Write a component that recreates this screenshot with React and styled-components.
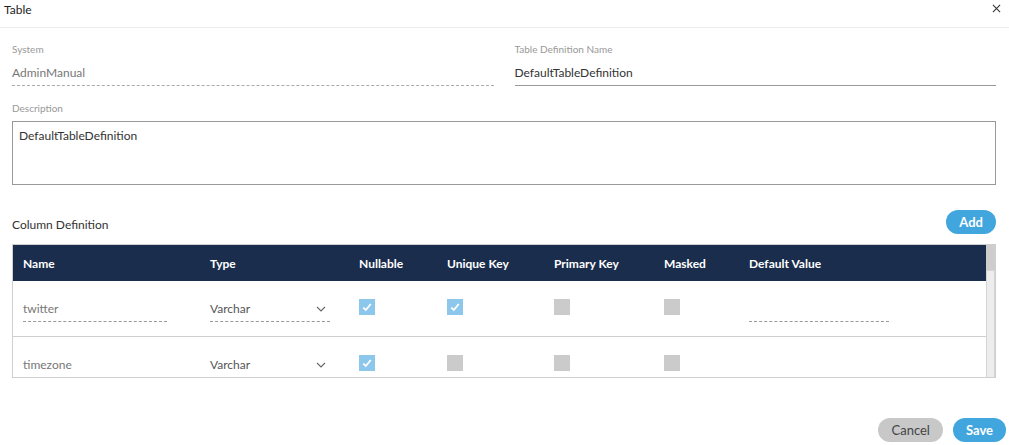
import React from "react";
import styled, { createGlobalStyle } from "styled-components";

const Global = createGlobalStyle`
  html, body { margin: 0; padding: 0; background: #fff; }
  body { font-family: "Segoe UI", Lato, "Open Sans", sans-serif; color: #333; }
  * { box-sizing: border-box; }
`;

const Dialog = styled.div`
  width: 1009px;
  height: 445px;
  display: flex;
  flex-direction: column;
  background: #fff;
`;

const Header = styled.div`
  height: 28px;
  border-bottom: 1px solid #ececec;
  padding: 2px 8px 0 4px;
  display: flex;
  justify-content: space-between;
  align-items: flex-start;
`;

const Title = styled.div`
  font-size: 12px;
  line-height: 16px;
  color: #222;
`;

const Close = styled.svg`
  width: 9px;
  height: 9px;
  margin-top: 2px;
`;

const Body = styled.div`
  padding: 14px 13px 0 12px;
  display: flex;
  flex-direction: column;
`;

const FieldRow = styled.div`
  display: grid;
  grid-template-columns: 1fr 1fr;
  column-gap: 21px;
`;

const Field = styled.div`
  display: flex;
  flex-direction: column;
`;

const Label = styled.div`
  font-size: 10px;
  line-height: 14px;
  color: #999;
  margin-top: ${(p) => p.$mt || 0}px;
`;

const Value = styled.div`
  font-size: 12px;
  line-height: 16px;
  padding: 9px 0 4px;
  color: ${(p) => (p.$readonly ? "#777" : "#333")};
  border-bottom: 1px ${(p) => (p.$readonly ? "dashed #aaa" : "solid #999")};
`;

const TextArea = styled.div`
  margin-top: 6px;
  height: 64px;
  border: 1px solid #999;
  padding: 6px 6px;
  font-size: 12px;
  line-height: 16px;
  color: #333;
`;

const SectionBar = styled.div`
  margin-top: 25px;
  display: flex;
  justify-content: space-between;
  align-items: center;
  height: 24px;
`;

const SectionTitle = styled.div`
  font-size: 12px;
  line-height: 16px;
  color: #333;
  padding-top: 6px;
`;

const PillButton = styled.button`
  height: 24px;
  border: none;
  border-radius: 12px;
  padding: 0 ${(p) => p.$px || 12}px;
  font-family: inherit;
  font-size: 13px;
  font-weight: ${(p) => (p.$primary ? 700 : 400)};
  background: ${(p) => (p.$primary ? "#41a5de" : "#c8c8c8")};
  color: ${(p) => (p.$primary ? "#fff" : "#444")};
  cursor: pointer;
`;

const TableWrap = styled.div`
  margin-top: 10px;
  height: 134px;
  border: 1px solid #cfcfcf;
  display: flex;
  overflow: hidden;
`;

const TableArea = styled.div`
  flex: 1;
  overflow: hidden;
`;

const cols = "187px 149px 88px 107px 110px 85px 1fr";

const HeadRow = styled.div`
  display: grid;
  grid-template-columns: ${cols};
  height: 36px;
  background: #1a2d4c;
  align-items: center;
`;

const HeadCell = styled.div`
  padding-left: 10px;
  font-size: 12px;
  font-weight: 700;
  color: #fff;
`;

const Row = styled.div`
  display: grid;
  grid-template-columns: ${cols};
  height: 56px;
  border-bottom: 1px solid #cfcfcf;
  align-items: start;
`;

const Cell = styled.div`
  padding-left: 10px;
  padding-top: 18px;
`;

const InputLine = styled.div`
  width: ${(p) => p.$w}px;
  height: 23px;
  padding-top: 2px;
  font-size: 12px;
  line-height: 16px;
  color: #777;
  border-bottom: ${(p) => (p.$underline ? "1px dashed #999" : "none")};
`;

const SelectLine = styled.div`
  width: 120px;
  height: 23px;
  padding-top: 2px;
  display: flex;
  justify-content: space-between;
  font-size: 12px;
  line-height: 16px;
  color: #555;
  border-bottom: ${(p) => (p.$underline ? "1px dashed #999" : "none")};
`;

const Chevron = styled.svg`
  width: 10px;
  height: 6px;
  margin: 5px 4px 0 0;
`;

const Box = styled.div`
  width: 16px;
  height: 16px;
  background: ${(p) => (p.$on ? "#8dc8ec" : "#cbcbcb")};
  display: flex;
  align-items: center;
  justify-content: center;
`;

const Scrollbar = styled.div`
  width: 9px;
  display: flex;
  flex-direction: column;
  background: #cdcdcd;
`;

const Thumb = styled.div`
  margin-top: 25px;
  flex: 1;
  background: #ededed;
  border: 1px solid #d4d4d4;
  border-bottom: none;
`;

const Footer = styled.div`
  margin-top: auto;
  padding: 0 3px 3px 0;
  display: flex;
  justify-content: flex-end;
  gap: 10px;
`;

const Check = ({ on }) => (
  <Box $on={on}>
    {on && (
      <svg width="12" height="12" viewBox="0 0 12 12">
        <path d="M2.3 6.6 L4.8 9 L9.8 3" fill="none" stroke="#fff" strokeWidth="1.8" />
      </svg>
    )}
  </Box>
);

const Down = () => (
  <Chevron viewBox="0 0 10 6">
    <path d="M1 1 L5 5 L9 1" fill="none" stroke="#666" strokeWidth="1.1" />
  </Chevron>
);

const rows = [
  { name: "twitter", type: "Varchar", checks: [true, true, false, false], underline: true },
  { name: "timezone", type: "Varchar", checks: [true, false, false, false], underline: false },
];

export default function App() {
  return (
    <>
      <Global />
      <Dialog>
        <Header>
          <Title>Table</Title>
          <Close viewBox="0 0 10 10">
            <path d="M1 1 L9 9 M9 1 L1 9" stroke="#333" strokeWidth="1.2" />
          </Close>
        </Header>
        <Body>
          <FieldRow>
            <Field>
              <Label>System</Label>
              <Value $readonly>AdminManual</Value>
            </Field>
            <Field>
              <Label>Table Definition Name</Label>
              <Value>DefaultTableDefinition</Value>
            </Field>
          </FieldRow>
          <Label $mt={15}>Description</Label>
          <TextArea>DefaultTableDefinition</TextArea>
          <SectionBar>
            <SectionTitle>Column Definition</SectionTitle>
            <PillButton $primary $px={13}>Add</PillButton>
          </SectionBar>
          <TableWrap>
            <TableArea>
              <HeadRow>
                {["Name", "Type", "Nullable", "Unique Key", "Primary Key", "Masked", "Default Value"].map((h) => (
                  <HeadCell key={h}>{h}</HeadCell>
                ))}
              </HeadRow>
              {rows.map((r) => (
                <Row key={r.name}>
                  <Cell>
                    <InputLine $w={144} $underline={r.underline}>
                      {r.name}
                    </InputLine>
                  </Cell>
                  <Cell>
                    <SelectLine $underline={r.underline}>
                      <span>{r.type}</span>
                      <Down />
                    </SelectLine>
                  </Cell>
                  {r.checks.map((c, i) => (
                    <Cell key={i}>
                      <Check on={c} />
                    </Cell>
                  ))}
                  <Cell>
                    {r.underline && <InputLine $w={140} $underline />}
                  </Cell>
                </Row>
              ))}
            </TableArea>
            <Scrollbar>
              <Thumb />
            </Scrollbar>
          </TableWrap>
        </Body>
        <Footer>
          <PillButton $px={13}>Cancel</PillButton>
          <PillButton $primary $px={13}>Save</PillButton>
        </Footer>
      </Dialog>
    </>
  );
}
